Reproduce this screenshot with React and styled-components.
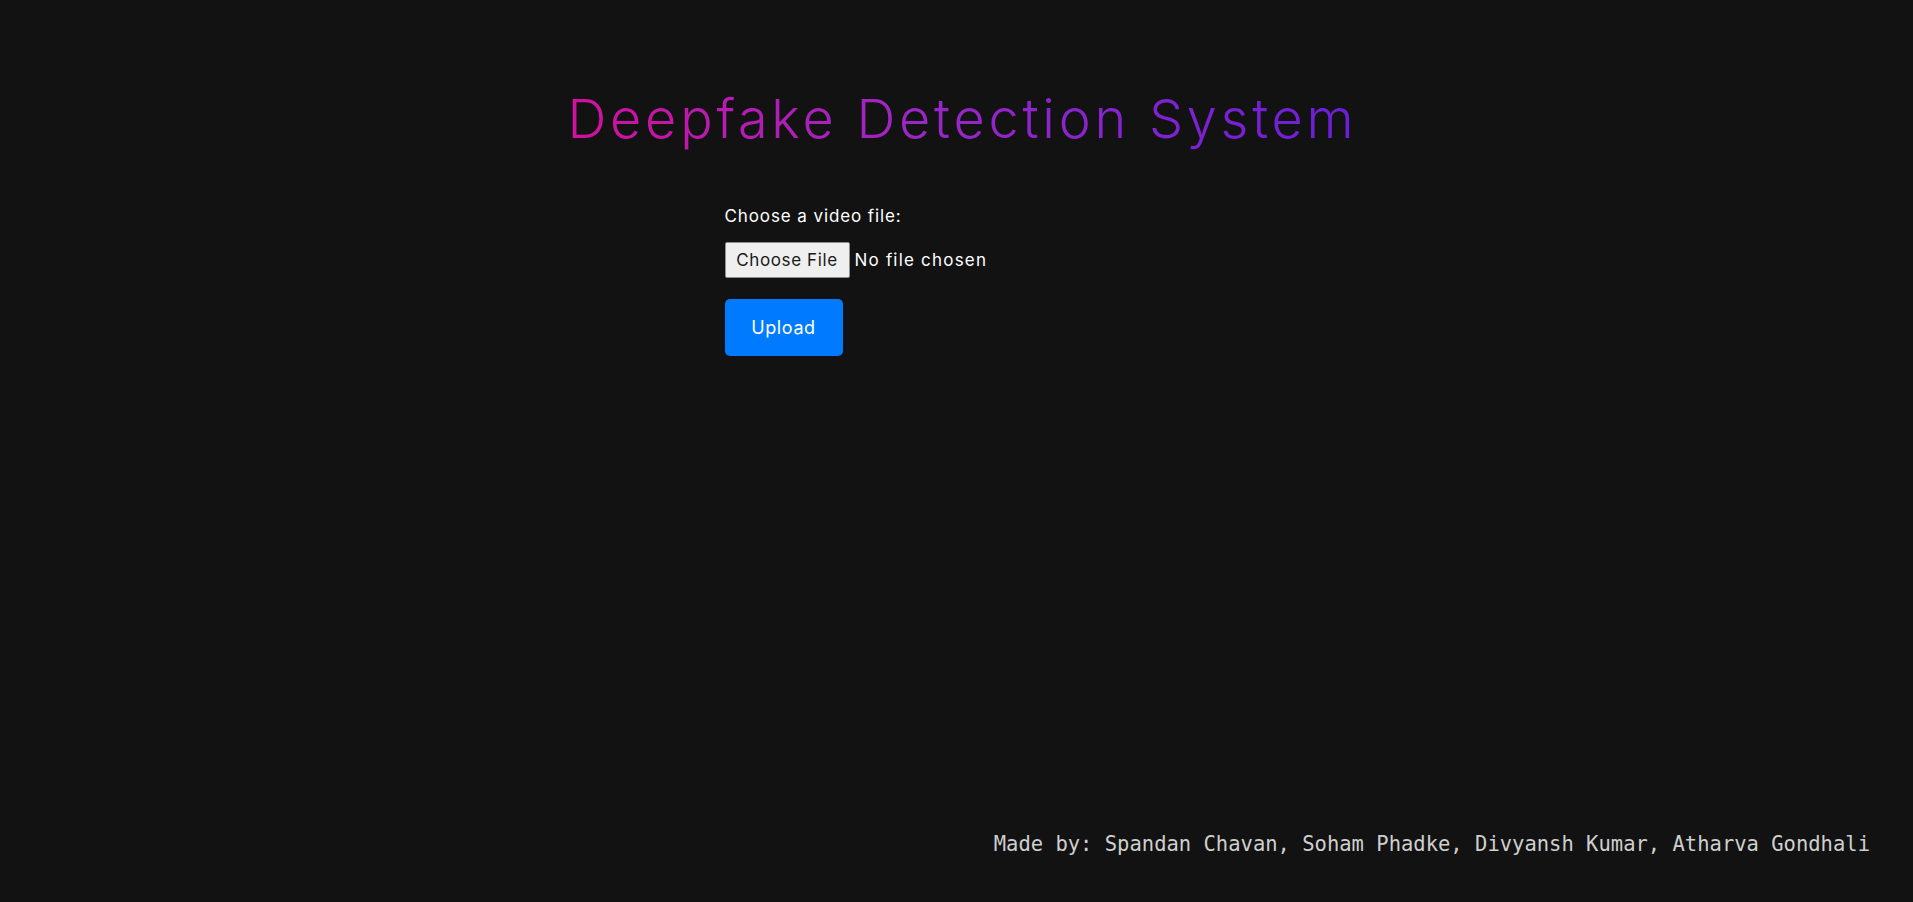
import React from "react";
import styled, { createGlobalStyle } from "styled-components";

const GlobalStyle = createGlobalStyle`
  html, body {
    margin: 0;
    padding: 0;
    background-color: #121212;
    color: #ffffff;
    font-family: Inter, "Liberation Sans", sans-serif;
  }
`;

const Page = styled.main`
  display: flex;
  flex-direction: column;
  min-height: 100vh;
  box-sizing: border-box;
  padding: 87px 43px 45px;
`;

const Title = styled.h1`
  margin: 0 0 0 12px;
  align-self: center;
  font-size: 54px;
  font-weight: 300;
  line-height: 1.2;
  letter-spacing: 3.75px;
  background: linear-gradient(90deg, #d2109e 0%, #9a27c6 45%, #6a1fd6 100%);
  -webkit-background-clip: text;
  background-clip: text;
  color: transparent;
`;

const Form = styled.form`
  display: flex;
  flex-direction: column;
  align-items: flex-start;
  align-self: center;
  width: 500px;
  box-sizing: border-box;
  padding: 0 22px 0 18px;
  margin-top: 54px;
  letter-spacing: 0.9px;
`;

const Label = styled.label`
  font-size: 17px;
  line-height: 1.2;
  color: #ffffff;
  margin-bottom: 16px;
`;

const FileInput = styled.input`
  font-family: inherit;
  font-size: 17px;
  letter-spacing: 1.2px;
  color: #ffffff;
  height: 36px;

  &::file-selector-button {
    font-family: inherit;
    font-size: 17px;
    letter-spacing: 0.6px;
    color: #1a1a1a;
    width: 125px;
    height: 36px;
    padding: 0;
    margin-right: 5px;
    background-color: #efefef;
    border: 1px solid #8f8f8f;
    border-radius: 2px;
  }
`;

const UploadButton = styled.button`
  margin-top: 21px;
  width: 118px;
  height: 57px;
  border: none;
  border-radius: 5px;
  background-color: #007bff;
  color: #ffffff;
  font-family: inherit;
  font-size: 18px;
  letter-spacing: 0.6px;
  cursor: pointer;
`;

const Footer = styled.footer`
  margin-top: auto;
  align-self: flex-end;
  font-family: "DejaVu Sans Mono", "Liberation Mono", monospace;
  font-size: 20.5px;
  line-height: 1.2;
  color: #cfcfcf;
`;

export default function App() {
  return (
    <>
      <GlobalStyle />
      <Page>
        <Title>Deepfake Detection System</Title>
        <Form onSubmit={(e) => e.preventDefault()}>
          <Label htmlFor="video">Choose a video file:</Label>
          <FileInput id="video" type="file" accept="video/*" />
          <UploadButton type="submit">Upload</UploadButton>
        </Form>
        <Footer>
          Made by: Spandan Chavan, Soham Phadke, Divyansh Kumar, Atharva Gondhali
        </Footer>
      </Page>
    </>
  );
}
